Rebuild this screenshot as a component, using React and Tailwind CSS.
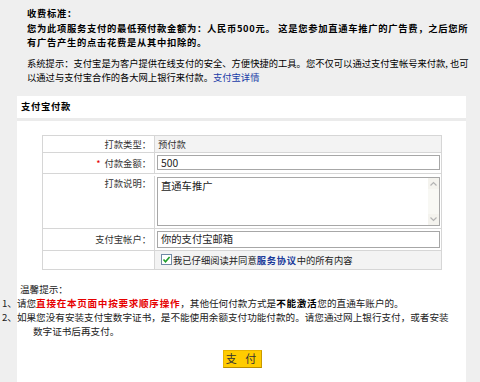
import React from "react";

function ScrollArrow({ up }) {
  return (
    <div className="flex h-[11px] w-[11px] items-center justify-center bg-[#f4f3ee]">
      <svg width="7" height="5" viewBox="0 0 7 5">
        <path
          d={up ? "M0.5 4.5 L3.5 1.5 L6.5 4.5" : "M0.5 0.5 L3.5 3.5 L6.5 0.5"}
          fill="none"
          stroke="#b4b4b4"
          strokeWidth="1.2"
        />
      </svg>
    </div>
  );
}

function Row({ label, required, className, valueClass, children }) {
  return (
    <div className={`grid grid-cols-[112px_1fr] border-b border-[#d6d6d6] ${className}`}>
      <div className="border-r border-[#d6d6d6] pr-[3px] text-right text-[#333]">
        {required && <span className="mr-[4px] text-[#e60000]">*</span>}
        {label}
      </div>
      <div className={valueClass}>{children}</div>
    </div>
  );
}

export default function App() {
  return (
    <div className="h-[382px] w-[480px] overflow-hidden bg-[#efefef] font-['Noto_Sans_CJK_SC',sans-serif] text-[9.3px] leading-[14.5px] text-black">
      <div className="pl-[27px] pt-[6px]">
        <div className="font-bold tracking-[0.7px]">
          收费标准：
          <br />
          您为此项服务支付的最低预付款金额为：人民币500元。 这是您参加直通车推广的广告费，之后您所
          <br />
          有广告产生的点击花费是从其中扣除的。
        </div>
        <div className="mt-[6px]">
          系统提示：支付宝是为客户提供在线支付的安全、方便快捷的工具。您不仅可以通过支付宝帐号来付款, 也可
          <br />
          以通过与支付宝合作的各大网上银行来付款。
          <span className="text-[#1a3ca8]">支付宝详情</span>
        </div>
      </div>

      <div className="ml-[17px] mt-[11px] w-[449px]">
        <div className="flex h-[25px] items-center border-b-[3px] border-[#ebebeb] bg-white pl-[4px] font-bold tracking-[0.7px]">
          支付宝付款
        </div>

        <div className="h-[261px] bg-white pt-[14px]">
          <div className="ml-[25px] w-[400px] border border-b-0 border-[#d6d6d6]">
            <Row label="打款类型：" className="h-[17px] leading-[16px]" valueClass="bg-[#f3f3f3] pl-[3px] text-[#333]">
              预付款
            </Row>
            <Row label="付款金额：" required className="h-[21px] items-center leading-[20px]" valueClass="flex h-full items-center">
              <div className="ml-[2px] flex h-[15px] w-[283px] items-center border border-[#a7a7a7] bg-white pl-[3px] text-[10.3px] leading-[13px] text-[#222]">
                500
              </div>
            </Row>
            <Row label="打款说明：" className="h-[55px] pt-[2px]" valueClass="pt-[1px]">
              <div className="ml-[2px] flex h-[49px] w-[283px] border border-[#a7a7a7] bg-white">
                <div className="flex-1 pl-[3px] pt-[1px] text-[10.3px] leading-[14px] text-[#222]">直通车推广</div>
                <div className="flex w-[11px] flex-col justify-between bg-[#f8f8f4]">
                  <ScrollArrow up />
                  <ScrollArrow />
                </div>
              </div>
            </Row>
            <Row label="支付宝帐户：" className="h-[22px] items-center leading-[21px]" valueClass="flex h-full items-center">
              <div className="ml-[2px] flex h-[17px] w-[283px] items-center border border-[#a7a7a7] bg-white pl-[3px] text-[10.3px] leading-[14px] text-[#222]">
                你的支付宝邮箱
              </div>
            </Row>
            <Row label="" className="h-[19px] leading-[18px]" valueClass="flex h-full items-center bg-[#f3f3f3] pl-[6px]">
              <svg width="11" height="11" viewBox="0 0 11 11" className="mr-[1px] shrink-0">
                <rect x="0.5" y="0.5" width="10" height="10" fill="#fff" stroke="#6f8aa6" />
                <path d="M2.5 5.5 L4.5 7.8 L8.6 3" fill="none" stroke="#1f9e2a" strokeWidth="1.6" />
              </svg>
              <span className="text-[#222]">
                我已仔细阅读并同意
                <span className="font-bold tracking-[0.7px] text-[#1a3a9a]">服务协议</span>
                中的所有内容
              </span>
            </Row>
          </div>

          <div className="mt-[12px] pl-[3px] text-[9.6px] leading-[14px] text-[#222]">
            <div>温馨提示：</div>
            <div className="-ml-[18px] whitespace-nowrap">
              1、请您
              <span className="font-bold tracking-[0.7px] text-[#e60000]">直接在本页面中按要求顺序操作</span>
              ，其他任何付款方式是
              <span className="font-bold tracking-[0.7px] text-black">不能激活</span>
              您的直通车账户的。
            </div>
            <div className="-ml-[18px] whitespace-nowrap">
              2、如果您没有安装支付宝数字证书，是不能使用余额支付功能付款的。请您通过网上银行支付，或者安装
            </div>
            <div className="pl-[13px]">数字证书后再支付。</div>
          </div>

          <div className="mt-[12px] flex justify-center pl-[2px]">
            <button className="flex h-[18px] w-[39px] items-center justify-center border border-[#e8b400] border-b-[#b98c00] border-r-[#c99a00] bg-[#ffcc00] text-[11px] leading-none tracking-[3px] text-[#333]">
              支 付
            </button>
          </div>
        </div>
      </div>
    </div>
  );
}
